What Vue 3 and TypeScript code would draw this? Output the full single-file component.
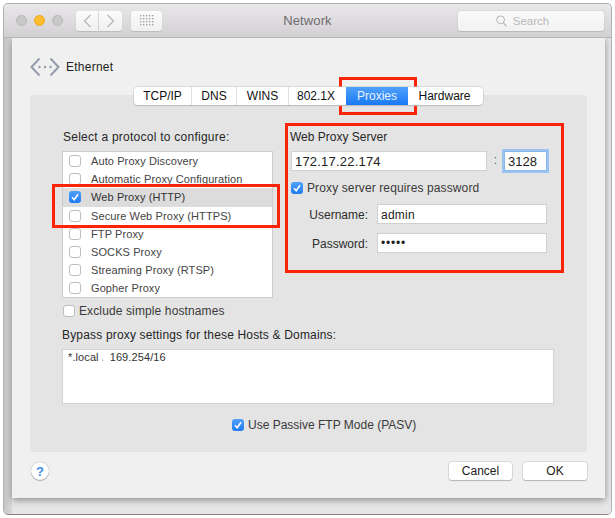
<script setup lang="ts">
interface Proto { name: string; checked: boolean; selected: boolean }
const protocols: Proto[] = [
  { name: 'Auto Proxy Discovery', checked: false, selected: false },
  { name: 'Automatic Proxy Configuration', checked: false, selected: false },
  { name: 'Web Proxy (HTTP)', checked: true, selected: true },
  { name: 'Secure Web Proxy (HTTPS)', checked: false, selected: false },
  { name: 'FTP Proxy', checked: false, selected: false },
  { name: 'SOCKS Proxy', checked: false, selected: false },
  { name: 'Streaming Proxy (RTSP)', checked: false, selected: false },
  { name: 'Gopher Proxy', checked: false, selected: false },
]
const tabs = ['TCP/IP', 'DNS', 'WINS', '802.1X', 'Proxies', 'Hardware']
</script>

<template>
  <div class="page">
    <div class="window">
      <header class="titlebar">
        <div class="lights">
          <span class="light"></span>
          <span class="light amber"></span>
          <span class="light"></span>
        </div>
        <div class="nav">
          <button class="tbtn back">
            <svg width="9" height="14" viewBox="0 0 9 14"><path d="M7.5 1 1.5 7l6 6" fill="none" stroke="#b8b8b8" stroke-width="1.3" /></svg>
          </button>
          <button class="tbtn fwd">
            <svg width="9" height="14" viewBox="0 0 9 14"><path d="M1.5 1l6 6-6 6" fill="none" stroke="#b8b8b8" stroke-width="1.3" /></svg>
          </button>
        </div>
        <button class="tbtn grid-btn">
          <svg width="14" height="11" viewBox="0 0 14 11">
            <g fill="#a4a4a4">
              <template v-for="r in 4" :key="r">
                <rect v-for="c in 5" :key="c" :x="(c - 1) * 3" :y="(r - 1) * 3" width="1.4" height="1.4" />
              </template>
            </g>
          </svg>
        </button>
        <div class="title">Network</div>
        <div class="search">
          <svg width="11" height="12" viewBox="0 0 11 12"><circle cx="4.6" cy="4.8" r="3.9" fill="none" stroke="#b4b4b4" stroke-width="1" /><path d="M7.4 7.8l3.2 3.6" stroke="#b4b4b4" stroke-width="1.2" /></svg>
          <span>Search</span>
        </div>
      </header>

      <div class="body">
        <section class="sheet">
          <div class="device">
            <svg width="30" height="20" viewBox="0 0 30 20">
              <path d="M9.5 1.5 1.5 10l8 8.5M20.5 1.5l8 8.5-8 8.5" fill="none" stroke="#949cab" stroke-width="2" />
              <circle cx="9.5" cy="10" r="1.2" fill="#949cab" />
              <circle cx="15" cy="10" r="1.2" fill="#949cab" />
              <circle cx="20.5" cy="10" r="1.2" fill="#949cab" />
            </svg>
            <span>Ethernet</span>
          </div>

          <nav class="tabs">
            <div v-for="t in tabs" :key="t" class="tab" :class="{ active: t === 'Proxies' }">{{ t }}</div>
          </nav>

          <div class="panel">
            <div class="columns">
              <div class="left">
                <div class="label proto-label">Select a protocol to configure:</div>
                <ul class="list">
                  <li v-for="p in protocols" :key="p.name" class="row" :class="{ selected: p.selected }">
                    <span class="cb" :class="{ on: p.checked }">
                      <svg v-if="p.checked" width="12" height="12" viewBox="0 0 12 12"><path d="M3 6.2 5.2 8.8 9 3.2" fill="none" stroke="#fff" stroke-width="1.6" /></svg>
                    </span>
                    <span>{{ p.name }}</span>
                  </li>
                </ul>
                <label class="check exclude">
                  <span class="cb"></span>
                  <span>Exclude simple hostnames</span>
                </label>
              </div>

              <div class="right">
                <div class="label server">Web Proxy Server</div>
                <div class="hostline">
                  <div class="input host">172.17.22.174</div>
                  <span class="colon">:</span>
                  <div class="input port">3128</div>
                </div>
                <label class="check req">
                  <span class="cb on">
                    <svg width="12" height="12" viewBox="0 0 12 12"><path d="M3 6.2 5.2 8.8 9 3.2" fill="none" stroke="#fff" stroke-width="1.6" /></svg>
                  </span>
                  <span>Proxy server requires password</span>
                </label>
                <div class="cred">
                  <span class="cred-label">Username:</span>
                  <div class="input">admin</div>
                </div>
                <div class="cred pw">
                  <span class="cred-label">Password:</span>
                  <div class="input dots">•••••</div>
                </div>
              </div>
            </div>

            <div class="label bypass">Bypass proxy settings for these Hosts &amp; Domains:</div>
            <div class="textarea">*.local<span class="sep">、</span>169.254/16</div>

            <label class="check passive">
              <span class="cb on">
                <svg width="12" height="12" viewBox="0 0 12 12"><path d="M3 6.2 5.2 8.8 9 3.2" fill="none" stroke="#fff" stroke-width="1.6" /></svg>
              </span>
              <span>Use Passive FTP Mode (PASV)</span>
            </label>
          </div>

          <footer class="footer">
            <button class="help">?</button>
            <div class="actions">
              <button class="btn">Cancel</button>
              <button class="btn">OK</button>
            </div>
          </footer>
        </section>
      </div>
    </div>

    <div class="mark mark-tab"></div>
    <div class="mark mark-proto"></div>
    <div class="mark mark-server"></div>
  </div>
</template>

<style>
html, body { margin: 0; background: #fff; }
</style>

<style scoped>
* { box-sizing: border-box; }
.page {
  position: relative;
  width: 615px;
  height: 518px;
  padding: 3px;
  overflow: hidden;
  background: #fff;
  font-family: "Liberation Sans", Arial, sans-serif;
  font-size: 12px;
  letter-spacing: 0.25px;
  color: #2e2e2e;
}
.window {
  width: 609px;
  height: 512px;
  display: flex;
  flex-direction: column;
  border: 1px solid #b0b0b0;
  border-bottom-color: #8c8580;
  border-radius: 5px;
  overflow: hidden;
  background: #ececec;
}
.titlebar {
  position: relative;
  flex: none;
  height: 34px;
  display: flex;
  align-items: center;
  padding: 0 7px 0 12px;
  background: linear-gradient(#e9e7e9, #d2d0d2);
  border-bottom: 1px solid #b5b3b5;
}
.lights { display: flex; gap: 7px; margin-right: 13px; }
.light {
  width: 11px;
  height: 11px;
  border-radius: 50%;
  background: #c9c8c9;
  border: 1px solid #b8b7b8;
}
.light.amber { background: #fdbd2e; border-color: #e8a922; }
.tbtn {
  height: 20px;
  padding: 0;
  display: flex;
  align-items: center;
  justify-content: center;
  background: linear-gradient(#fbfbfb, #f0f0f0);
  border: none;
  border-radius: 3px;
  box-shadow: 0 1px 1px #bcbabc;
}
.nav { display: flex; gap: 1px; margin-right: 9px; }
.back { width: 22px; border-radius: 3px 0 0 3px; }
.fwd { width: 23px; border-radius: 0 3px 3px 0; }
.grid-btn { width: 31px; }
.title {
  position: absolute;
  left: 0;
  right: 0;
  text-align: center;
  font-size: 13px;
  letter-spacing: 0.1px;
  color: #6e6c6e;
  pointer-events: none;
}
.search {
  margin-left: auto;
  width: 146px;
  height: 20px;
  padding-right: 17px;
  display: flex;
  align-items: center;
  justify-content: center;
  gap: 6px;
  background: linear-gradient(#fafafa, #f2f2f2);
  border-radius: 3px;
  box-shadow: 0 0 1px #a8a6a8, 0 1px 1px #bcbabc;
  color: #b9b9b9;
  font-size: 11.5px;
  letter-spacing: 0;
}
.body {
  flex: 1;
  padding: 0 6px 17px 8px;
  background: linear-gradient(90deg, #c6c6c6 0, #d8d8d8 8px, #e6e6e6 8px);
}
.sheet {
  height: 460px;
  padding: 19px 18px 0;
  background: #f0f0f0;
  box-shadow: 0 2px 7px rgba(0, 0, 0, 0.4);
}
.device {
  height: 20px;
  display: flex;
  align-items: center;
  gap: 6px;
  color: #222;
}
.tabs {
  position: relative;
  z-index: 1;
  width: fit-content;
  height: 18px;
  margin: 10px auto -10px;
  display: flex;
  background: #fff;
  border-radius: 4px;
  box-shadow: 0 0 0 0.5px #c4c4c4, 0 1px 1px #b4b4b4;
  letter-spacing: 0;
}
.tab {
  display: flex;
  align-items: center;
  justify-content: center;
  color: #111;
  border-right: 1px solid #dedede;
  width: 58px;
}
.tab:nth-child(2) { width: 45px; }
.tab:nth-child(3) { width: 52px; }
.tab:nth-child(4) { width: 54px; border-right: none; }
.tab:nth-child(5) { width: 65px; border-right: none; }
.tab:nth-child(6) { width: 75px; border-right: none; }
.tab.active {
  margin: 0 3px 0 3px;
  width: 62px;
  background: linear-gradient(#4fa2fb, #1a78f4);
  color: #e8f2ff;
}
.tab.active + .tab { width: 72px; padding-right: 5px; }
.panel {
  height: 357px;
  padding: 34px 32px 0;
  background: #e4e4e4;
  border-radius: 3px;
}
.columns { display: flex; gap: 17px; }
.left { width: 211px; flex: none; }
.right { width: 258px; flex: none; }
.label { height: 16px; line-height: 16px; color: #262626; white-space: nowrap; }
.proto-label { padding-left: 1px; }
.list {
  list-style: none;
  height: 147px;
  margin: 6px 0 0;
  padding: 0;
  background: #fff;
  border: 1px solid #cdcdcd;
}
.row {
  height: 18.2px;
  padding-left: 6px;
  display: flex;
  align-items: center;
  gap: 10px;
  font-size: 11px;
  letter-spacing: 0.1px;
  color: #444;
  white-space: nowrap;
}
.row.selected { background: #dcdcdc; color: #333; }
.cb {
  flex: none;
  width: 12px;
  height: 12px;
  background: #fff;
  border: 1px solid #bdbdbd;
  border-radius: 3px;
  display: inline-flex;
}
.cb.on {
  background: linear-gradient(#4fa0fa, #1f7cf3);
  border: none;
}
.check {
  display: flex;
  align-items: center;
  gap: 4px;
  color: #3a3a3a;
  white-space: nowrap;
  letter-spacing: 0.12px;
}
.exclude { height: 16px; margin-top: 5px; padding-left: 1px; }
.server { margin-bottom: 6px; letter-spacing: 0; }
.hostline { display: flex; align-items: flex-start; padding-left: 1px; }
.input {
  height: 20px;
  flex: 1;
  padding-left: 3px;
  line-height: 20px;
  background: #fff;
  border: 1px solid #d0d0d0;
  color: #222;
}
.host { flex: none; width: 196px; padding-left: 3px; font-size: 13px; letter-spacing: 0.2px; }
.colon { width: 17px; text-align: center; line-height: 18px; color: #555; }
.port {
  flex: none;
  width: 43px;
  height: 20px;
  font-size: 13px;
  letter-spacing: 0;
  box-shadow: 0 0 0 2px #9cc4f2;
  border-color: #8ab6ea;
}
.req { height: 16px; margin-top: 9px; padding-left: 1px; }
.cred {
  display: flex;
  align-items: center;
  gap: 9px;
  margin-top: 8px;
  padding-right: 1px;
}
.pw { margin-top: 9px; }
.cred-label { width: 78px; flex: none; padding-top: 2px; text-align: right; color: #2c2c2c; letter-spacing: 0; }
.dots { font-size: 12px; letter-spacing: 0.8px; line-height: 19px; color: #222; }
.bypass { margin-top: 8px; letter-spacing: 0.17px; }
.textarea {
  width: 492px;
  height: 55px;
  margin-top: 6px;
  padding: 1px 5px;
  background: #fff;
  border: 1px solid #d2d2d2;
  color: #333;
  white-space: pre;
  font-size: 11px;
  letter-spacing: 0.1px;
}
.sep { display: inline-block; width: 11px; padding-left: 2px; font-size: 7px; vertical-align: 1px; }
.passive {
  width: fit-content;
  height: 16px;
  margin: 13px 0 0 170px;
  letter-spacing: 0;
}
.footer {
  height: 46px;
  padding-top: 10px;
  display: flex;
  align-items: flex-start;
  justify-content: space-between;
}
.help {
  width: 18px;
  height: 18px;
  margin-left: 1px;
  padding: 0;
  background: #fff;
  border: none;
  border-radius: 50%;
  box-shadow: 0 0 1px #8a8a8a, 0 1px 1px #b0b0b0;
  color: #3d8cf0;
  font: bold 13px "Liberation Sans", Arial, sans-serif;
}
.actions { display: flex; gap: 11px; }
.btn {
  width: 63px;
  height: 18px;
  padding: 0;
  background: #fff;
  border: none;
  border-radius: 3px;
  box-shadow: 0 0 0 0.5px #c4c4c4, 0 1px 1px #aaa;
  font: 12px "Liberation Sans", Arial, sans-serif;
  letter-spacing: 0;
  color: #222;
}
.btn + .btn { width: 64px; }
.mark {
  position: absolute;
  border: 3px solid #fb2409;
  pointer-events: none;
}
.mark-tab { left: 339px; top: 77px; width: 78px; height: 38px; }
.mark-proto { left: 52px; top: 184px; width: 228px; height: 44px; }
.mark-server { left: 285px; top: 123px; width: 279px; height: 150px; }
</style>
